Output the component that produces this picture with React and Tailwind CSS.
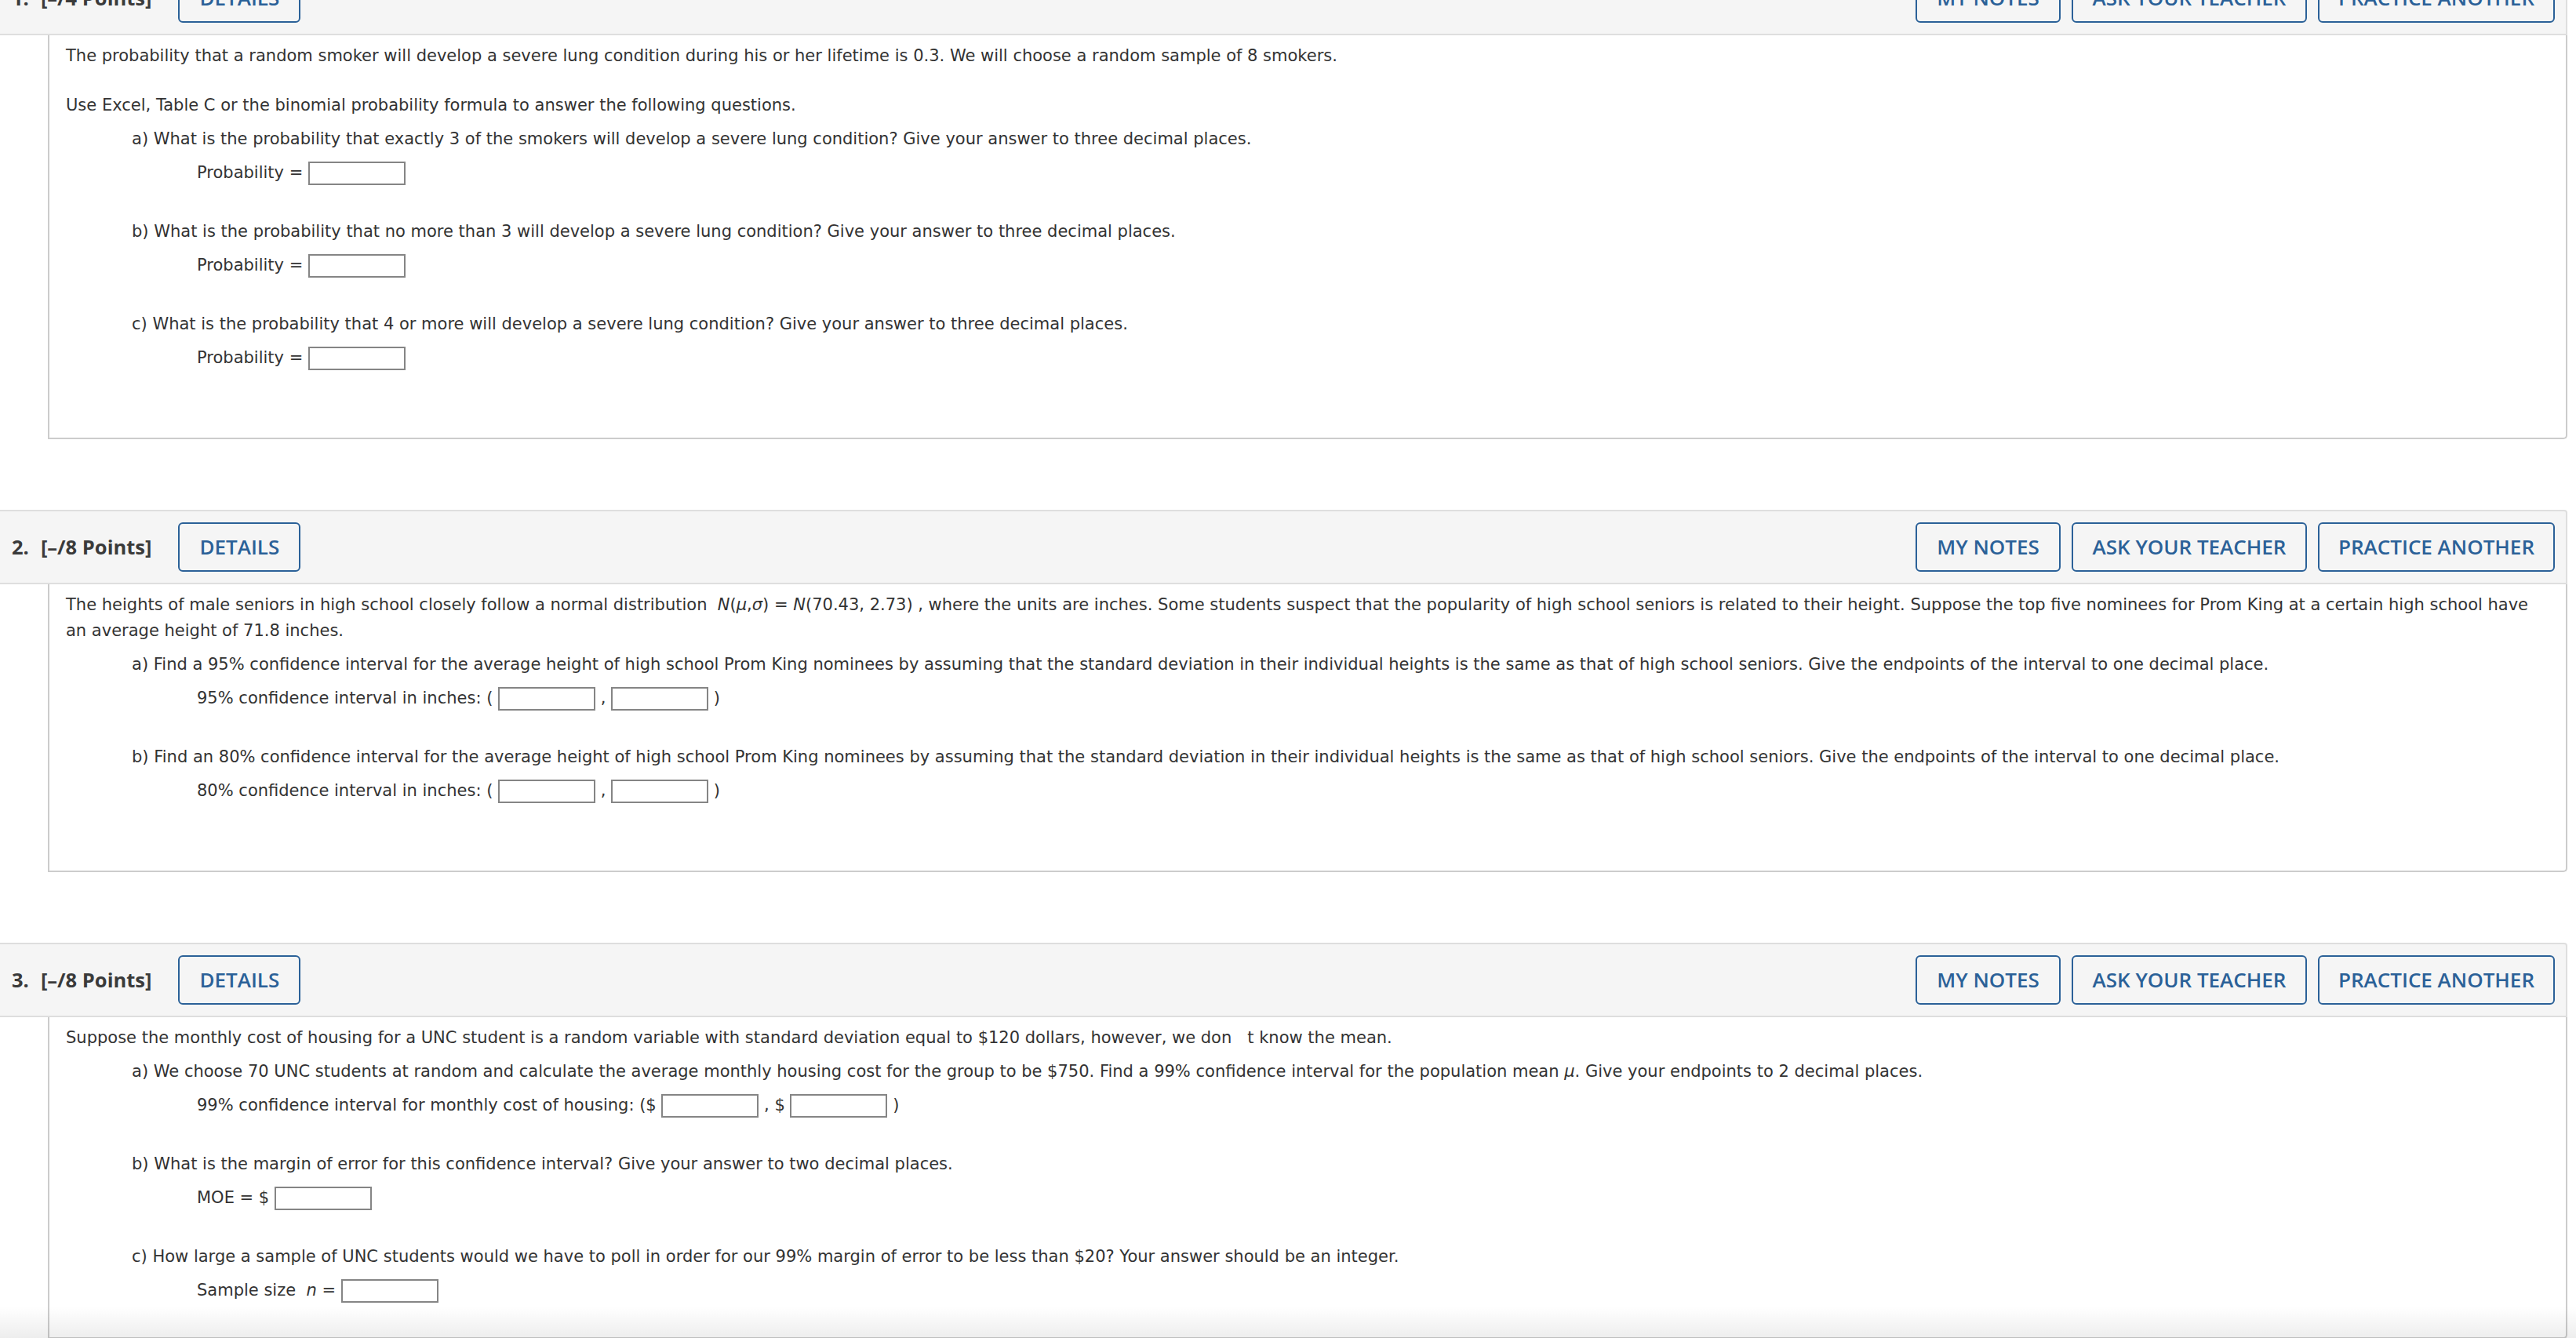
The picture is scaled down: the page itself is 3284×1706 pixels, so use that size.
import React from "react";

const BLUE = "border-[#2b6198] text-[#2b6198]";

function Btn({ w, children, className = "" }) {
  return (
    <div
      className={`h-[63px] ${w} border-2 ${BLUE} rounded-[6px] flex items-center justify-center text-[26px] font-semibold uppercase ${className}`}
    >
      {children}
    </div>
  );
}

function Header({ num, points }) {
  return (
    <div className="h-[95px] mr-[11px] bg-[#f5f5f5] border-y-2 border-r-2 border-[#dedede] rounded-tr-[4px] flex items-center pl-[15px] pr-[14px] font-['Open_Sans',sans-serif]">
      <div className="flex text-[25.5px] font-bold text-[#3a3a3a] leading-none">
        <span>{num}.</span>
        <span className="ml-[15px]">[–/{points} Points]</span>
      </div>
      <Btn w="w-[156px]" className="ml-[34px]">
        DETAILS
      </Btn>
      <div className="ml-auto flex gap-[14px]">
        <Btn w="w-[185px]">MY NOTES</Btn>
        <Btn w="w-[300px]">ASK YOUR TEACHER</Btn>
        <Btn w="w-[302px]">PRACTICE ANOTHER</Btn>
      </div>
    </div>
  );
}

function Box() {
  return (
    <span className="inline-block align-middle w-[124px] h-[30px] border-2 border-[#858585] bg-white" />
  );
}

function Part({ label, first, children, answer }) {
  return (
    <div className={`ml-[84px] ${first ? "mt-[10px]" : "mt-[37px]"}`}>
      <p>
        {label}) {children}
      </p>
      <div className="ml-[83px] mt-[4px] h-[44px] leading-[44px] whitespace-nowrap">
        {answer}
      </div>
    </div>
  );
}

function Card({ children, pb = "pb-[80px]" }) {
  return (
    <div
      className={`ml-[61px] mr-[11px] border-x-2 border-b-2 border-[#cccccc] rounded-br-[5px] pl-[21px] pr-[20px] pt-[10px] ${pb} font-['DejaVu_Sans',Verdana,sans-serif] text-[21px] leading-[33px] text-[#333333]`}
    >
      {children}
    </div>
  );
}

export default function App() {
  return (
    <div className="relative w-full h-[1706px] overflow-hidden bg-white">
      {/* Section 1 (scrolled) */}
      <div className="-mt-[50px]">
        <Header num="1" points="4" />
        <Card>
          <p>
            The probability that a random smoker will develop a severe lung
            condition during his or her lifetime is 0.3. We will choose a
            random sample of 8 smokers.
          </p>
          <p className="mt-[30px]">
            Use Excel, Table C or the binomial probability formula to answer
            the following questions.
          </p>
          <Part
            label="a"
            first
            answer={
              <>
                Probability = <Box />
              </>
            }
          >
            What is the probability that exactly 3 of the smokers will develop
            a severe lung condition? Give your answer to three decimal places.
          </Part>
          <Part
            label="b"
            answer={
              <>
                Probability = <Box />
              </>
            }
          >
            What is the probability that no more than 3 will develop a severe
            lung condition? Give your answer to three decimal places.
          </Part>
          <Part
            label="c"
            answer={
              <>
                Probability = <Box />
              </>
            }
          >
            What is the probability that 4 or more will develop a severe lung
            condition? Give your answer to three decimal places.
          </Part>
        </Card>
      </div>

      {/* Section 2 */}
      <div className="mt-[90px]">
        <Header num="2" points="8" />
        <Card>
          <p>
            The heights of male seniors in high school closely follow a normal
            distribution{"\u00a0 "}
            <i>N</i>(<i>μ</i>,<i>σ</i>) = <i>N</i>(70.43, 2.73) , where the
            units are inches. Some students suspect that the popularity of high
            school seniors is related to their height. Suppose the top five
            nominees for Prom King at a certain high school have an average
            height of 71.8 inches.
          </p>
          <Part
            label="a"
            first
            answer={
              <>
                95% confidence interval in inches: ( <Box /> , <Box /> )
              </>
            }
          >
            Find a 95% confidence interval for the average height of high
            school Prom King nominees by assuming that the standard deviation in
            their individual heights is the same as that of high school
            seniors. Give the endpoints of the interval to one decimal place.
          </Part>
          <Part
            label="b"
            answer={
              <>
                80% confidence interval in inches: ( <Box /> , <Box /> )
              </>
            }
          >
            Find an 80% confidence interval for the average height of high
            school Prom King nominees by assuming that the standard deviation in
            their individual heights is the same as that of high school
            seniors. Give the endpoints of the interval to one decimal place.
          </Part>
        </Card>
      </div>

      {/* Section 3 */}
      <div className="mt-[90px]">
        <Header num="3" points="8" />
        <Card pb="pb-[38px]">
          <p>
            Suppose the monthly cost of housing for a UNC student is a random
            variable with standard deviation equal to $120 dollars, however, we
            don{"\u00a0\u00a0 "}t know the mean.
          </p>
          <Part
            label="a"
            first
            answer={
              <>
                99% confidence interval for monthly cost of housing: ($ <Box />{" "}
                , $ <Box /> )
              </>
            }
          >
            We choose 70 UNC students at random and calculate the average
            monthly housing cost for the group to be $750. Find a 99%
            confidence interval for the population mean <i>μ</i>. Give your
            endpoints to 2 decimal places.
          </Part>
          <Part
            label="b"
            answer={
              <>
                MOE = $ <Box />
              </>
            }
          >
            What is the margin of error for this confidence interval? Give your
            answer to two decimal places.
          </Part>
          <Part
            label="c"
            answer={
              <>
                Sample size{"\u00a0 "}
                <i>n</i> = <Box />
              </>
            }
          >
            How large a sample of UNC students would we have to poll in order
            for our 99% margin of error to be less than $20? Your answer should
            be an integer.
          </Part>
        </Card>
      </div>

      <div className="pointer-events-none absolute bottom-0 left-0 right-0 h-[40px] bg-linear-to-b from-transparent to-black/[0.07]" />
    </div>
  );
}
